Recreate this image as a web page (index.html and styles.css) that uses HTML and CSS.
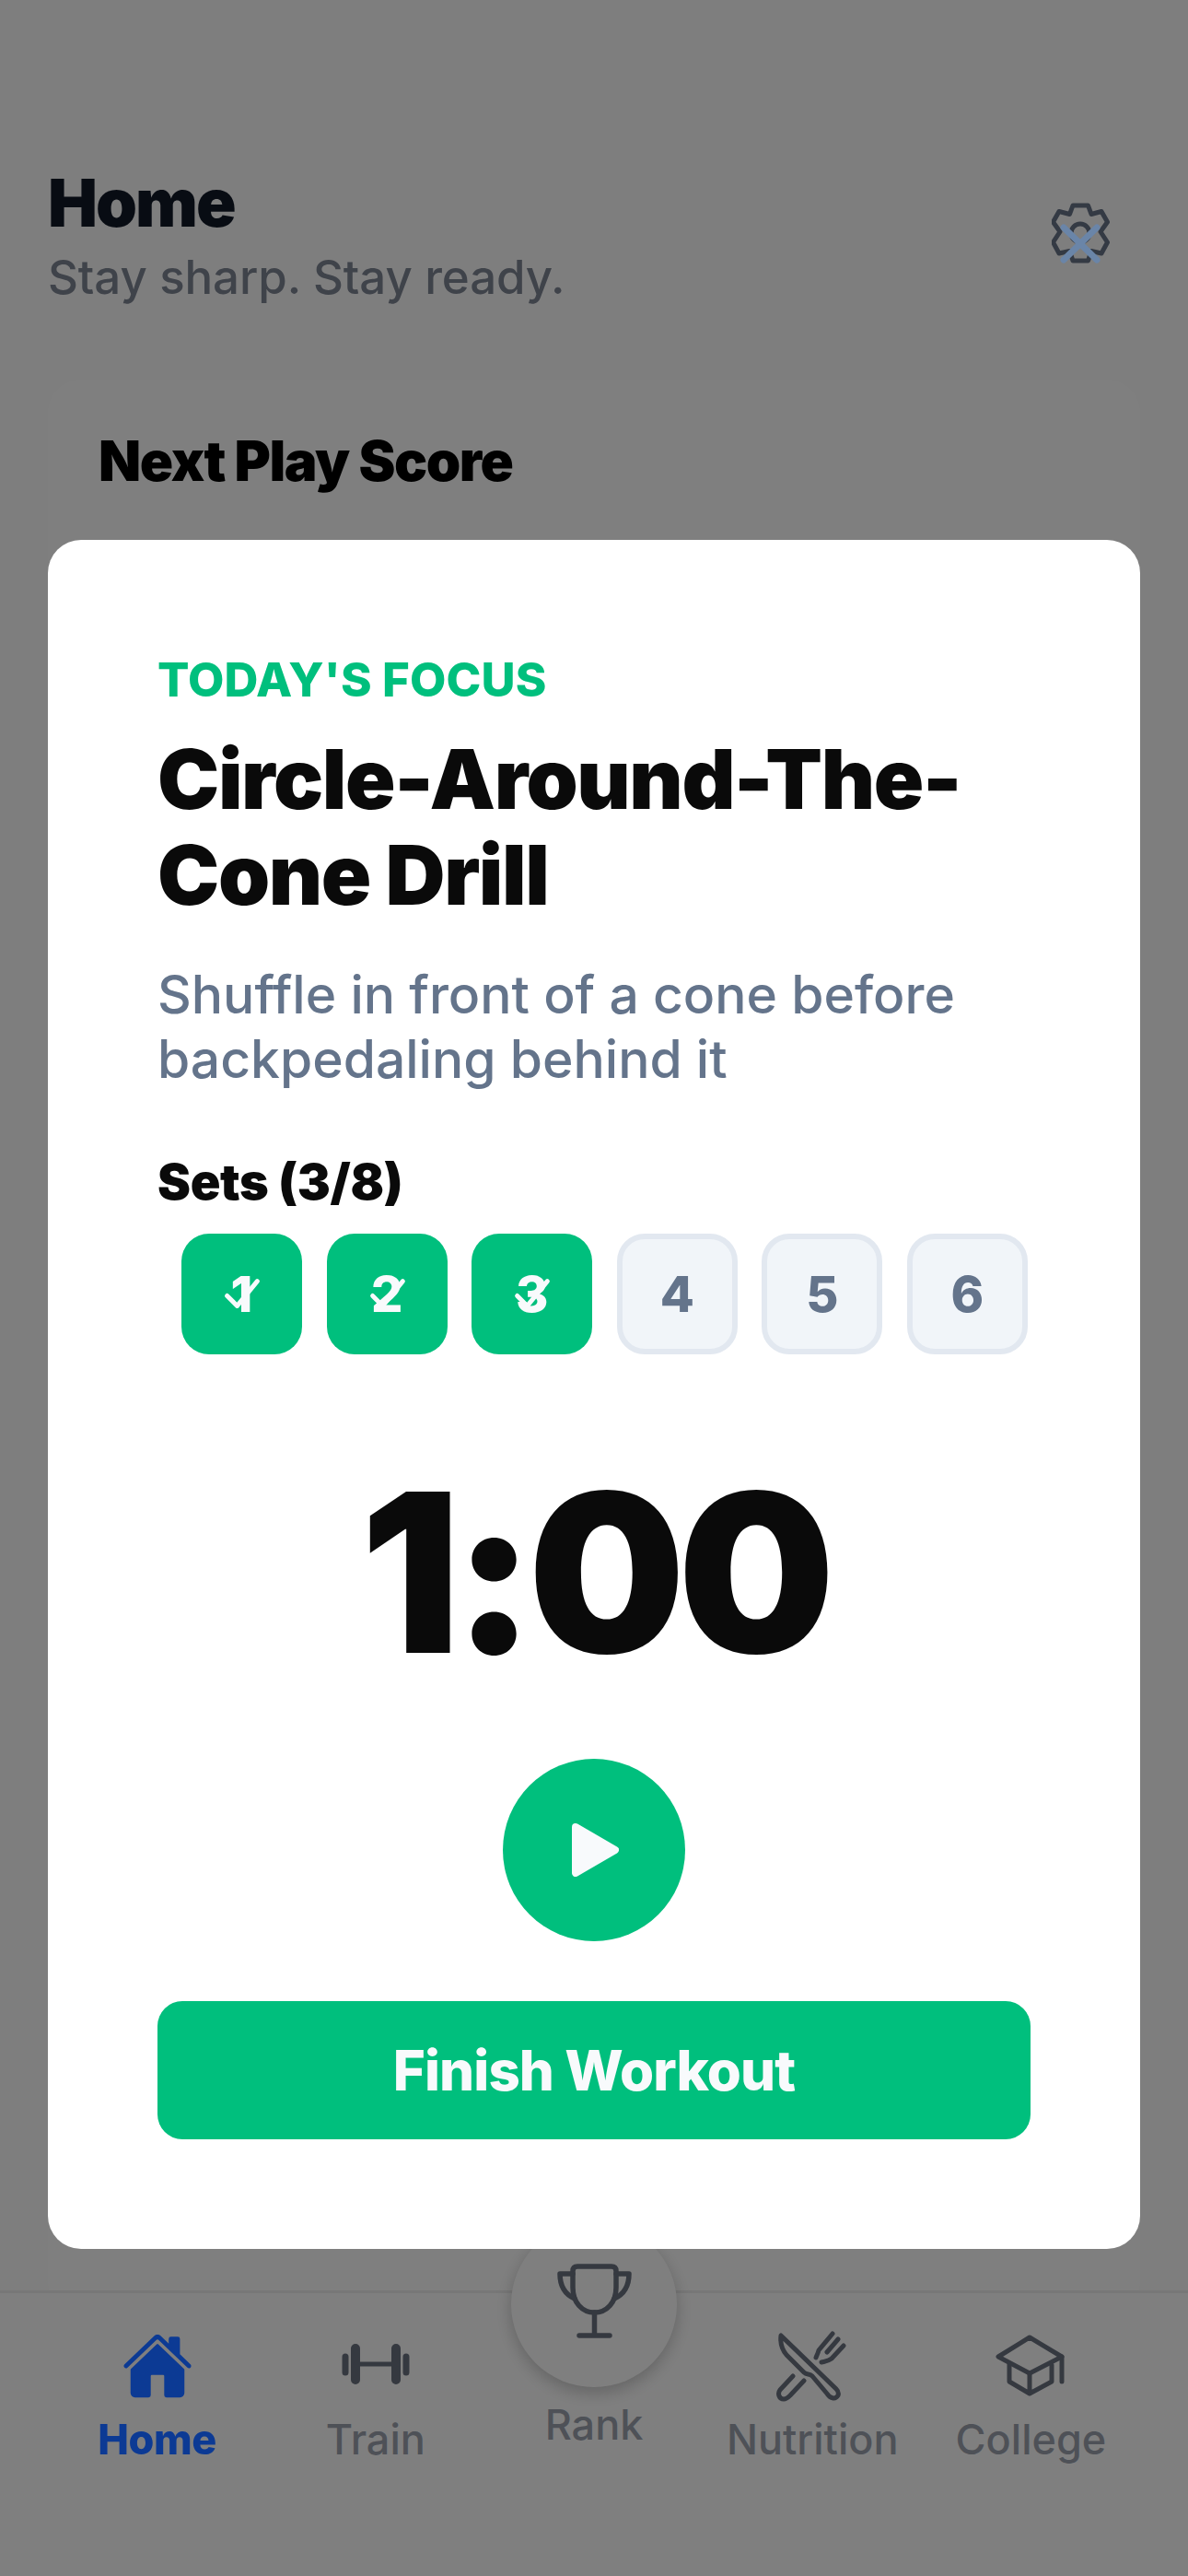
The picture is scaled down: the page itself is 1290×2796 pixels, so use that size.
FILE: index.html
```html
<!DOCTYPE html>
<html lang="en">
<head>
<meta charset="utf-8">
<title>Home</title>
<link rel="stylesheet" href="styles.css">
</head>
<body>
<div class="app">
  <header class="top">
    <div class="top-text">
      <h1 class="page-title">Home</h1>
      <p class="page-sub">Stay sharp. Stay ready.</p>
    </div>
    <svg class="gear" viewBox="0 0 63 66" fill="none">
      <path class="gear-line" d="M23 3H39.5L43 12.5L54 9.5L60.5 21L53 31.5L60.5 43L54 55L43 52.5L39.5 63H23L19.5 52.5L8 55L1.5 43L9 31.5L1.5 21L8 9.5L19.5 12.5Z"/>
      <circle class="gear-line" cx="31" cy="33" r="10"/>
      <path class="gear-x" d="M13 27L49 62M49 27L13 62"/>
    </svg>
  </header>
  <section class="score-card">
    <h2 class="score-title">Next Play Score</h2>
  </section>
  <nav class="tabs">
    <div class="tab tab-active">
      <svg class="tab-icon" viewBox="0 0 512 512" fill="currentColor">
        <path d="M261.56 101.28a8 8 0 00-11.06 0L66.4 277.15a8 8 0 00-2.47 5.79L63.9 448a32 32 0 0032 32H192a16 16 0 0016-16V328a8 8 0 018-8h80a8 8 0 018 8v136a16 16 0 0016 16h96.06a32 32 0 0032-32V282.94a8 8 0 00-2.47-5.79z"/>
        <path d="M490.91 244.15l-74.8-71.56V64a16 16 0 00-16-16h-48a16 16 0 00-16 16v32l-57.92-55.38C272.77 35.14 264.71 32 256 32c-8.68 0-16.72 3.14-22.14 8.63l-212.7 203.5c-6.22 6-7 15.87-1.34 22.37A16 16 0 0043 267.56L250.5 69.28a8 8 0 0111.06 0l207.52 198.28a16 16 0 0022.59-.44c6.14-6.36 5.63-16.86-.76-22.97z"/>
      </svg>
      <span>Home</span>
    </div>
    <div class="tab">
      <svg class="tab-icon" viewBox="0 0 78 78" fill="none" stroke="currentColor" stroke-linecap="round">
        <path stroke-width="10" d="M17 20V54M61 20V54"/>
        <path stroke-width="7" d="M6 29V46M72 29V46"/>
        <path stroke-width="5" d="M17 37H61"/>
      </svg>
      <span>Train</span>
    </div>
    <div class="tab tab-rank">
      <div class="rank-disc">
        <svg class="trophy" viewBox="0 0 81 82" fill="none" stroke="currentColor" stroke-width="5.5" stroke-linecap="round" stroke-linejoin="round">
          <path d="M17 8Q17 3 22 3H59Q64 3 64 8V26C64 42 54 53 40.5 53C27 53 17 42 17 26Z"/>
          <path d="M17 11H3C3 23 8 33 19 38M64 11H78C78 23 73 33 62 38M40.5 53V78M24 78H57"/>
        </svg>
      </div>
      <span>Rank</span>
    </div>
    <div class="tab">
      <svg class="tab-icon" viewBox="-2 -2 78 78" fill="none" stroke="currentColor" stroke-width="5" stroke-linecap="round" stroke-linejoin="round">
        <path d="M3 4C2 12 4 19 9 25L28 44C31 47 34 45 37 48L53 67C56 72 62 74 65 69C66 66 65 64 63 62Z"/>
        <path d="M16 48L2 63C-1 67 1 73 6 73C9 73 11 71 13 69L28 53"/>
        <path d="M59 2L44 20C43 24 42 25 41 28M71 15L58 29C54 32 51 32 47 33M65 8L53 22"/>
      </svg>
      <span>Nutrition</span>
    </div>
    <div class="tab">
      <svg class="tab-icon" viewBox="-2 -6 78 78" fill="none" stroke="currentColor" stroke-width="5" stroke-linecap="round" stroke-linejoin="round">
        <path d="M36 2L2 23L36 41L71 23Z"/>
        <path d="M14 31V50L36 63L60 50V32M36 41V63M71 23V50"/>
      </svg>
      <span>College</span>
    </div>
  </nav>
</div>
<div class="overlay">
  <section class="modal">
    <p class="eyebrow">TODAY'S FOCUS</p>
    <h2 class="drill">Circle-Around-The-Cone Drill</h2>
    <p class="desc">Shuffle in front of a cone before backpedaling behind it</p>
    <h3 class="sets-label">Sets (3/8)</h3>
    <div class="sets">
      <div class="set set-done">1<svg class="set-check" viewBox="0 0 132 132" fill="none"><path d="M50 68L61 79L83 52"/></svg></div>
      <div class="set set-done">2<svg class="set-check" viewBox="0 0 132 132" fill="none"><path d="M50 68L61 79L83 52"/></svg></div>
      <div class="set set-done">3<svg class="set-check" viewBox="0 0 132 132" fill="none"><path d="M50 68L61 79L83 52"/></svg></div>
      <div class="set">4</div>
      <div class="set">5</div>
      <div class="set">6</div>
    </div>
    <div class="timer">1:00</div>
    <div class="play">
      <svg class="play-icon" viewBox="0 0 51 58"><path d="M4 4L47 29L4 54Z"/></svg>
    </div>
    <button class="finish">Finish Workout</button>
  </section>
</div>
</body>
</html>
```
FILE: styles.css
```css
* { box-sizing: border-box; }
html, body { margin: 0; padding: 0; }
body { width: 1290px; height: 2796px; overflow: hidden; background: #fff; font-family: Inter, "Liberation Sans", sans-serif; }
.app { position: relative; height: 2796px; padding: 0 52px; background: #fcfcfc; }
.top { display: flex; justify-content: space-between; align-items: flex-start; padding-top: 176px; }
.page-title { margin: 0; font-size: 72px; line-height: 88px; font-weight: 900; letter-spacing: -2px; color: #111827; }
.page-sub { margin: 5px 0 0; font-size: 51px; line-height: 64px; font-weight: 500; letter-spacing: -.1px; color: #7f8694; }
.gear { position: relative; z-index: 2; width: 63px; height: 66px; margin: 44px 33px 0 0; }
.gear-line { fill: none; stroke: #343a44; stroke-width: 5; stroke-linejoin: round; }
.gear-x { fill: none; stroke: #6a85a8; stroke-width: 7; stroke-linecap: round; }
.score-card { margin-top: 79px; height: 2100px; background: #fff; border-radius: 36px; padding: 52px 55px; }
.score-title { margin: 0; font-size: 60px; line-height: 72px; font-weight: 900; letter-spacing: -1.4px; color: #000; }
.tabs { position: absolute; left: 0; right: 0; top: 2486px; height: 310px; display: flex; justify-content: center; background: #fff; border-top: 3px solid #eee; padding: 40px 52px 0; }
.tab { flex: 1 1 0; display: flex; flex-direction: column; align-items: center; font-size: 45px; line-height: 54px; font-weight: 500; color: #9ca3af; }
.tab-icon { width: 78px; height: 78px; margin-bottom: 14px; color: #6b7280; }
.tab-active { position: relative; z-index: 2; color: #0c3a94; font-weight: 800; letter-spacing: -.4px; }
.tab-active .tab-icon { color: #0c3a94; }
.tab-rank { position: relative; top: -8px; }
.rank-disc { width: 180px; height: 180px; margin-top: -110px; margin-bottom: 14px; border-radius: 50%; background: #fff; box-shadow: 0 6px 18px rgba(0,0,0,.22); display: flex; justify-content: center; padding-top: 46px; }
.trophy { width: 81px; height: 82px; color: #6b7280; }
.overlay { position: fixed; inset: 0; background: rgba(0,0,0,.5); padding: 586px 52px 0; }
.modal { width: 1186px; height: 1855px; background: #fff; border-radius: 36px; padding: 124px 119px 0; }
.eyebrow { margin: 0; font-size: 51px; line-height: 56px; font-weight: 800; color: #00bf7d; letter-spacing: .1px; }
.drill { margin: 28px 0 0; font-size: 90px; line-height: 104px; font-weight: 900; letter-spacing: -1.4px; color: #0a0a0a; }
.desc { margin: 43px 0 0; font-size: 57px; line-height: 70px; font-weight: 500; color: #64748b; }
.sets-label { margin: 68px 0 0; font-size: 54px; line-height: 60px; font-weight: 900; letter-spacing: -.3px; color: #0a0a0a; }
.sets { display: flex; gap: 26.6px; margin: 26px 0 0 26px; }
.set { position: relative; width: 131px; height: 131px; flex: none; display: flex; align-items: center; justify-content: center; border-radius: 30px; background: #f1f5f9; border: 6px solid #e2e8f0; font-size: 54px; font-weight: 800; color: #64748b; }
.set-done { background: #00bf7d; border: 0; color: #f8fafc; }
.set-check { position: absolute; left: 0; top: 0; width: 131px; height: 131px; }
.set-check path { stroke: #f8fafc; stroke-width: 5; stroke-linecap: round; stroke-linejoin: round; }
.timer { margin-top: 67px; text-align: center; font-size: 240px; line-height: 340px; font-weight: 900; color: #0a0a0a; letter-spacing: -8px; }
.play { width: 198px; height: 198px; margin: 32px auto 0; border-radius: 50%; background: #00bf7d; display: flex; align-items: center; justify-content: center; }
.play-icon { width: 51px; height: 58px; margin-left: 2px; fill: #f8fafc; stroke: #f8fafc; stroke-width: 8; stroke-linejoin: round; }
.finish { display: block; width: 948px; height: 150px; margin-top: 65px; border: 0; border-radius: 27px; background: #00bf7d; color: #f8fafc; font-family: inherit; font-size: 60px; font-weight: 800; letter-spacing: -.9px; }
```
